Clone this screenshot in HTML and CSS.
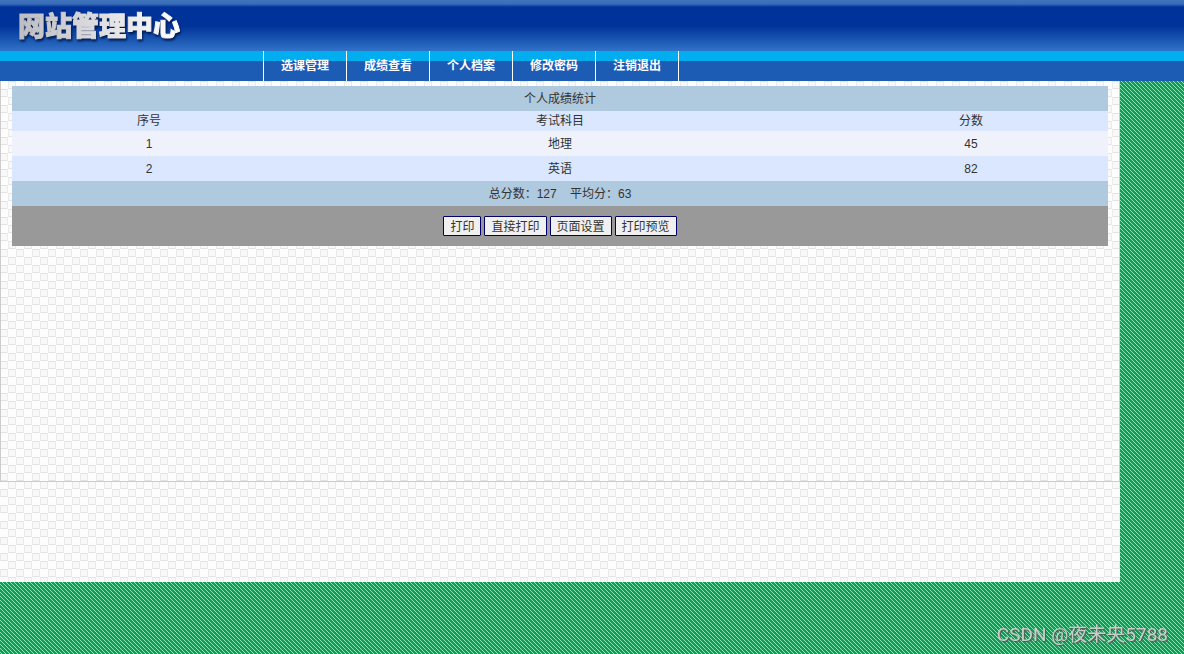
FILE: index.html
```html
<!DOCTYPE html>
<html lang="zh-CN">
<head>
    <meta charset="UTF-8">
    <meta name="viewport" content="width=device-width, initial-scale=1.0">
    <title>网站管理中心</title>
    <link rel="stylesheet" href="styles.css">
</head>
<body>
    <header class="header">
        <h1 class="logo">网站管理中心</h1>
    </header>
    <nav class="nav">
        <a class="nav-link" href="#">选课管理</a>
        <a class="nav-link" href="#">成绩查看</a>
        <a class="nav-link" href="#">个人档案</a>
        <a class="nav-link" href="#">修改密码</a>
        <a class="nav-link" href="#">注销退出</a>
    </nav>

    <main class="main">
        <div class="content">
            <table class="score">
                <colgroup>
                    <col class="col-side">
                    <col class="col-mid">
                    <col class="col-side">
                </colgroup>
                <thead>
                    <tr class="bar"><td colspan="3">个人成绩统计</td></tr>
                    <tr class="head">
                        <th>序号</th>
                        <th>考试科目</th>
                        <th>分数</th>
                    </tr>
                </thead>
                <tbody>
                    <tr class="odd"><td>1</td><td>地理</td><td>45</td></tr>
                    <tr class="even"><td>2</td><td>英语</td><td>82</td></tr>
                    <tr class="bar"><td colspan="3">总分数：127 &nbsp;&nbsp; 平均分：63</td></tr>
                    <tr class="tools">
                        <td colspan="3">
                            <div class="buttons">
                                <button class="btn" type="button">打印</button>
                                <button class="btn" type="button">直接打印</button>
                                <button class="btn" type="button">页面设置</button>
                                <button class="btn" type="button">打印预览</button>
                            </div>
                        </td>
                    </tr>
                </tbody>
            </table>
        </div>
    </main>

    <div class="watermark">CSDN @夜未央5788</div>
</body>
</html>
```

FILE: styles.css
```css
* {
    box-sizing: border-box;
}
body {
    margin: 0;
    min-height: 100vh;
    font-family: "Liberation Sans", Arial, "Noto Sans CJK SC", sans-serif;
    font-size: 12px;
    color: #333;
    background: #139c58 url("data:image/svg+xml,%3Csvg xmlns='http://www.w3.org/2000/svg' width='4' height='4' shape-rendering='crispEdges' fill='%238be3b3'%3E%3Crect width='1' height='1'/%3E%3Crect x='1' y='1' width='1' height='1'/%3E%3Crect x='2' y='2' width='1' height='1'/%3E%3Crect x='3' y='3' width='1' height='1'/%3E%3C/svg%3E");
}

/* header */
.header {
    display: flex;
    align-items: center;
    height: 51px;
    padding: 2px 18px 0;
    background: linear-gradient(#3f75bd 0, #3a6cb8 4px, #003399 7px, #003399 26px, #3073c8 100%);
}
.logo {
    margin: 0;
    font-size: 27px;
    line-height: 40px;
    font-weight: 900;
    color: transparent;
    background: linear-gradient(90deg, #bdbdc2, #fff);
    -webkit-background-clip: text;
    background-clip: text;
    -webkit-text-stroke: 1px transparent;
    filter: drop-shadow(1px 2px 1px #001a4d);
}
.nav {
    display: flex;
    height: 30px;
    padding-left: 263px;
    background: linear-gradient(#00aeef 10px, #1c5cb5 10px);
}
.nav-link {
    width: 83px;
    padding-top: 1px;
    border-left: 1px solid #fff;
    line-height: 29px;
    font-weight: bold;
    text-align: center;
    text-decoration: none;
    color: #fff;
}
.nav-link:last-child {
    width: 84px;
    border-right: 1px solid #fff;
}

/* content */
.main {
    min-height: 501px;
    margin-right: 64px;
    background: #fdfdfd url("data:image/svg+xml,%3Csvg xmlns='http://www.w3.org/2000/svg' width='16' height='16' shape-rendering='crispEdges'%3E%3Cg fill='%23f8f8f8'%3E%3Crect x='8' width='8' height='8'/%3E%3Crect y='8' width='8' height='8'/%3E%3C/g%3E%3Cpath d='M8 .5H16M0 8.5H8M8 7.5H16M0 15.5H8' stroke='%23e3e3e3'/%3E%3Cpath d='M8.5 0V8M.5 8V16M15.5 0V8M7.5 8V16' stroke='%23ebebeb'/%3E%3C/svg%3E");
}
.content {
    min-height: 401px;
    padding: 5px 11px;
    border: solid #ccc;
    border-width: 0 1px 1px;
}
.score {
    width: 100%;
    table-layout: fixed;
    border-collapse: collapse;
    text-align: center;
}
.col-side {
    width: 25%;
}
.col-mid {
    width: 50%;
}
.score td,
.score th {
    height: 25px;
    padding: 0;
    line-height: 18px;
    font-weight: normal;
}
.score .head th {
    height: 20px;
}
.score .tools td {
    height: 40px;
}
.bar {
    background: #afc9de;
}
.head,
.even {
    background: #dae7fe;
}
.odd {
    background: #f0f2fb;
}
.tools {
    background: #999;
}
.buttons {
    display: flex;
    justify-content: center;
    gap: 3px;
}
.btn {
    height: 20px;
    padding: 2px 6px 0;
    border: 1px solid #000066;
    border-radius: 1px;
    background: #f0f0f0;
    font-family: inherit;
    font-size: 12px;
    line-height: 16px;
    color: #333;
}

.watermark {
    position: fixed;
    right: 16px;
    bottom: 6px;
    font-family: Roboto, "Noto Sans CJK SC", sans-serif;
    font-size: 19px;
    line-height: 26px;
    color: #c8cfca;
    text-shadow: 1px 1px 1px #555;
}
```
